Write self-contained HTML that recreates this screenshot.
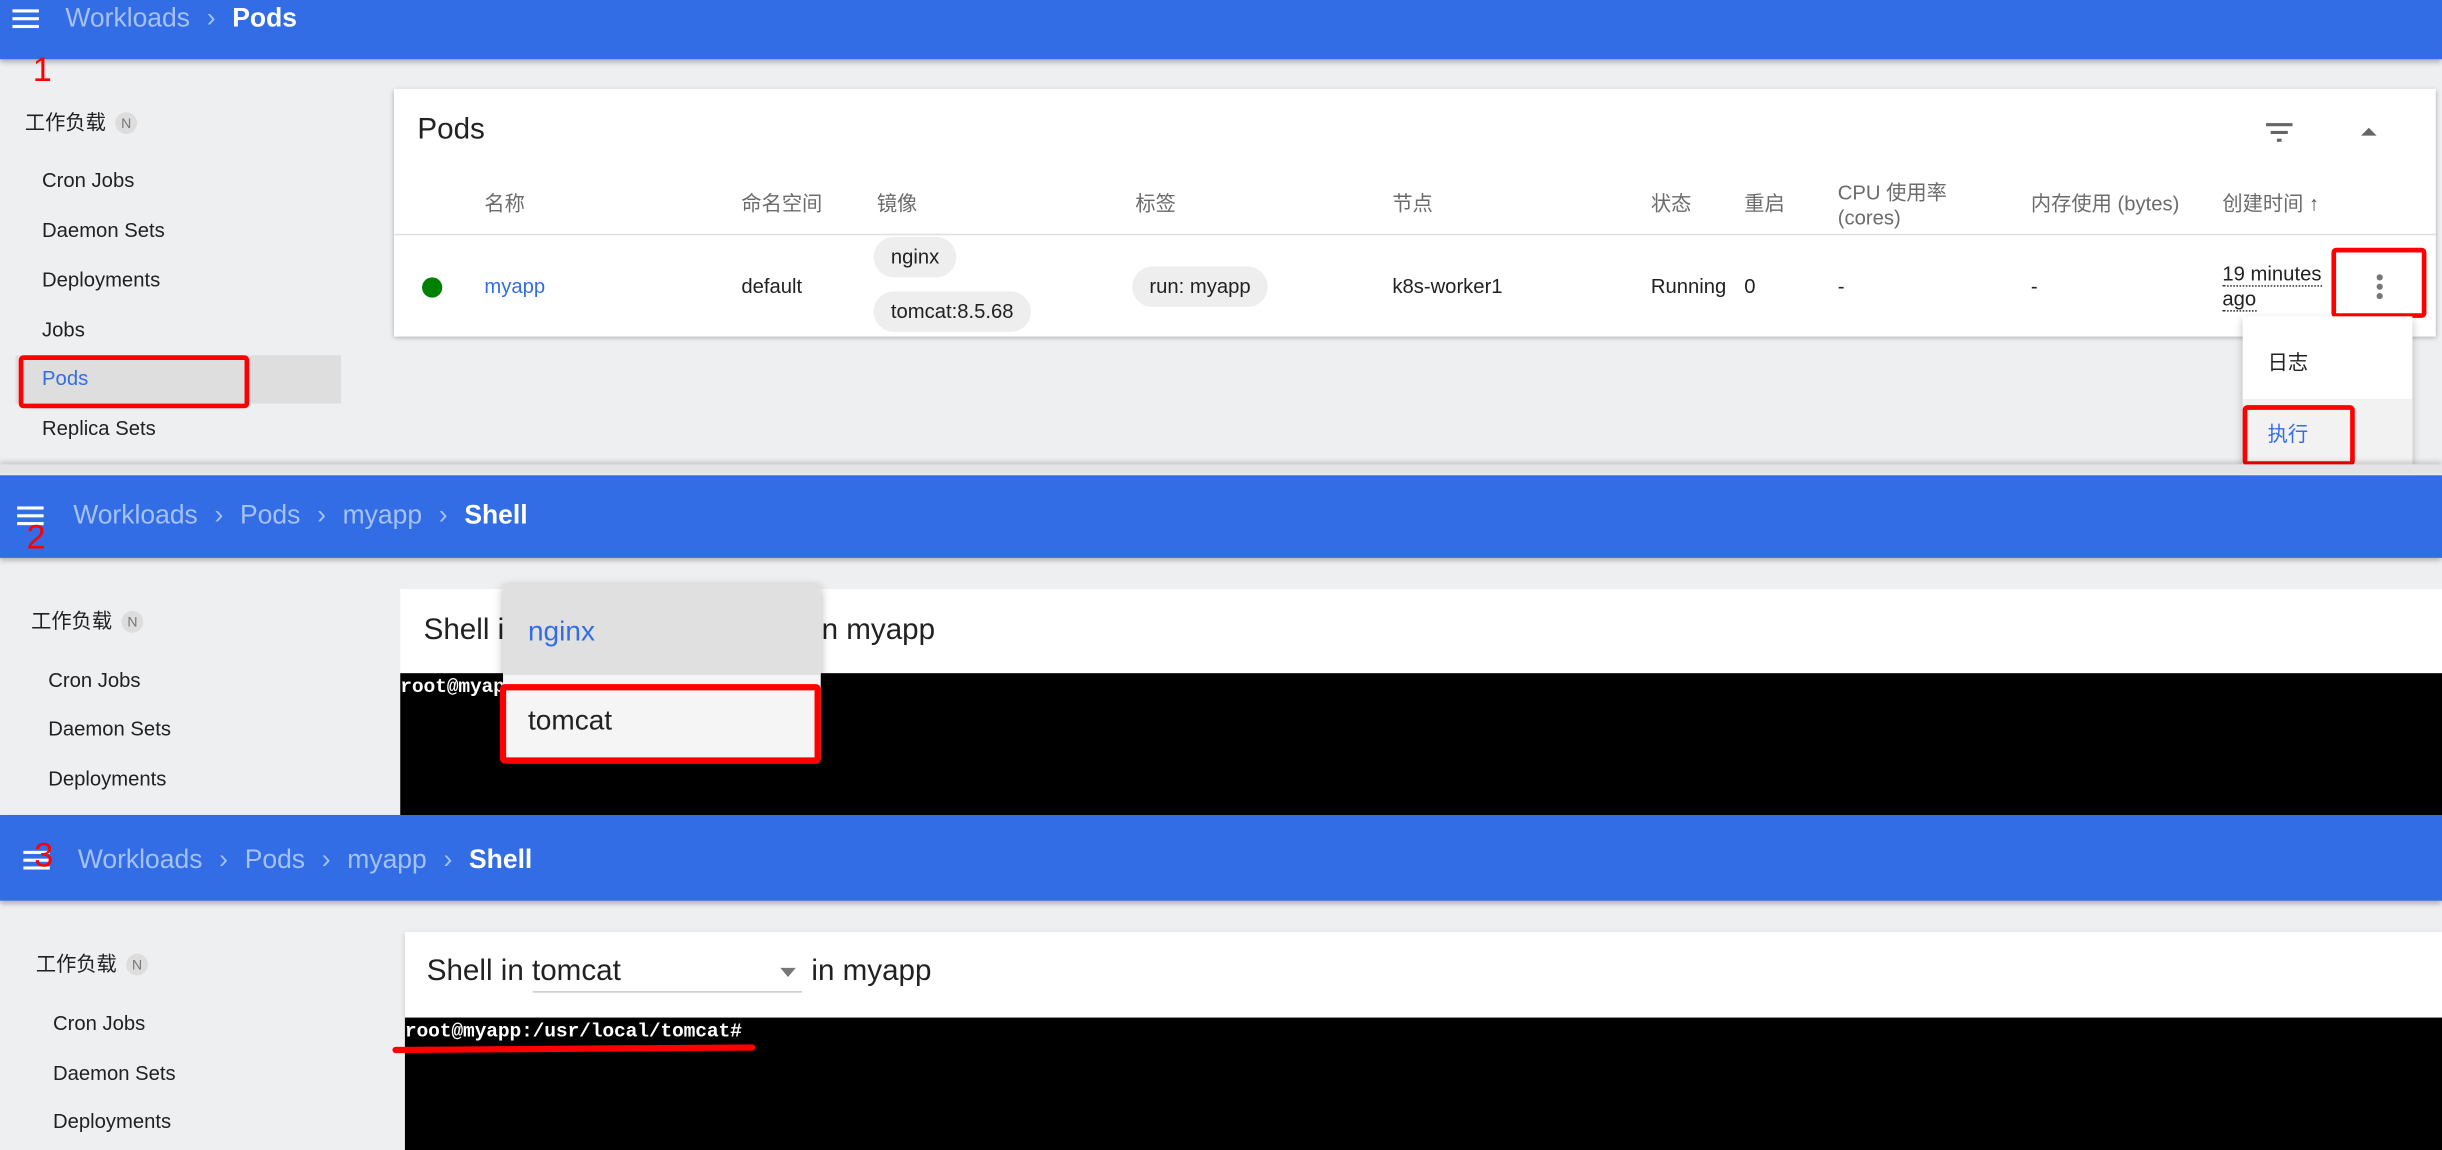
<!DOCTYPE html>
<html><head><meta charset="utf-8"><style>
*{margin:0;padding:0;box-sizing:border-box}
html,body{width:2442px;height:1150px;overflow:hidden;background:#eeeff1}
#w{position:absolute;left:0;top:0;width:1568px;height:738px;transform-origin:0 0;transform:scale(1.55740,1.5583);font-family:"Liberation Sans","Noto Sans CJK SC",sans-serif;color:#212121}
.a{position:absolute;white-space:nowrap}
.hdr{position:absolute;left:0;width:1568px;background:#326de6;box-shadow:0 2px 3px rgba(0,0,0,.25)}
.bc{position:absolute;font-size:17px;line-height:20px;color:#a6c1f4}
.bc b{color:#fff}
.ham{position:absolute;width:17px;height:12px;border-top:2px solid #fff;border-bottom:2px solid #fff}
.ham:after{content:"";position:absolute;left:0;right:0;top:3px;border-top:2px solid #fff}
.red{position:absolute;border:3px solid #f00;border-radius:3px}
.rn{position:absolute;color:#f00;font-size:22px;line-height:22px}
.sb{position:absolute;font-size:13px;line-height:16px;color:#212121}
.badge{display:inline-block;width:14px;height:14px;border-radius:7px;background:#ddd;color:#777;font-size:9px;line-height:14px;text-align:center;vertical-align:1px;margin-left:6px}
.card{position:absolute;background:#fff;box-shadow:0 1px 3px rgba(0,0,0,.3)}
.th{position:absolute;font-size:13px;line-height:16px;color:#6b6b6b}
.td{position:absolute;font-size:13px;line-height:16px;color:#212121}
.chip{position:absolute;background:#eeeeee;border-radius:13px;font-size:13px;line-height:26px;padding:0 11px;color:#212121}
.term{position:absolute;background:#000;color:#fff;font-family:"Liberation Mono","DejaVu Sans Mono",monospace;font-size:12.6px;line-height:15px;font-weight:bold;letter-spacing:-0.1px}
</style></head><body><div id="w">

<!-- PANEL 1 -->
<div class="hdr" style="top:0;height:38px"></div>
<div class="ham" style="left:8px;top:6px"></div>
<div class="bc" style="left:42px;top:2px">Workloads <span style="margin:0 6px">&#8250;</span> <b>Pods</b></div>
<div class="rn" style="left:21px;top:34px">1</div>

<div class="sb" style="left:16px;top:71px">工作负载<span class="badge">N</span></div>
<div class="sb" style="left:27px;top:108px">Cron Jobs</div>
<div class="sb" style="left:27px;top:140px">Daemon Sets</div>
<div class="sb" style="left:27px;top:172px">Deployments</div>
<div class="sb" style="left:27px;top:204px">Jobs</div>
<div class="a" style="left:10px;top:228px;width:209px;height:31px;background:#dedede"></div>
<div class="sb" style="left:27px;top:235px;color:#326de6">Pods</div>
<div class="red" style="left:12px;top:228px;width:148px;height:34px"></div>
<div class="sb" style="left:27px;top:267px">Replica Sets</div>

<div class="card" style="left:253px;top:57px;width:1311px;height:159px"></div>
<div class="a" style="left:268px;top:73px;font-size:19px;line-height:22px">Pods</div>
<svg class="a" style="left:1454px;top:77px" width="19" height="16" viewBox="0 0 19 16"><rect x="1" y="2" width="17" height="2" fill="#666"/><rect x="4" y="7" width="11" height="2" fill="#666"/><rect x="8" y="12" width="3" height="2" fill="#666"/></svg>
<svg class="a" style="left:1516px;top:81px" width="10" height="7"><path d="M0 6 L5 1 L10 6Z" fill="#666"/></svg>

<div class="th" style="left:311px;top:123px">名称</div>
<div class="th" style="left:476px;top:123px">命名空间</div>
<div class="th" style="left:563px;top:123px">镜像</div>
<div class="th" style="left:729px;top:123px">标签</div>
<div class="th" style="left:894px;top:123px">节点</div>
<div class="th" style="left:1060px;top:123px">状态</div>
<div class="th" style="left:1120px;top:123px">重启</div>
<div class="th" style="left:1180px;top:116px">CPU 使用率<br>(cores)</div>
<div class="th" style="left:1304px;top:123px">内存使用 (bytes)</div>
<div class="th" style="left:1427px;top:123px">创建时间 <b style="color:#555">&#8593;</b></div>
<div class="a" style="left:253px;top:150px;width:1311px;height:1px;background:#e0e0e0"></div>

<div class="a" style="left:271px;top:178px;width:13px;height:13px;border-radius:7px;background:#008000"></div>
<div class="td" style="left:311px;top:176px;color:#326de6">myapp</div>
<div class="td" style="left:476px;top:176px">default</div>
<div class="chip" style="left:561px;top:152px">nginx</div>
<div class="chip" style="left:561px;top:187px">tomcat:8.5.68</div>
<div class="chip" style="left:727px;top:171px">run: myapp</div>
<div class="td" style="left:894px;top:176px">k8s-worker1</div>
<div class="td" style="left:1060px;top:176px">Running</div>
<div class="td" style="left:1120px;top:176px">0</div>
<div class="td" style="left:1180px;top:176px">-</div>
<div class="td" style="left:1304px;top:176px">-</div>
<div class="td" style="left:1427px;top:168px;line-height:16px"><span style="border-bottom:1px dotted #333">19 minutes</span><br><span style="border-bottom:1px dotted #333">ago</span></div>
<svg class="a" style="left:1525px;top:175px" width="6" height="18"><circle cx="3" cy="3" r="2" fill="#777"/><circle cx="3" cy="9" r="2" fill="#777"/><circle cx="3" cy="15" r="2" fill="#777"/></svg>
<div class="red" style="left:1497px;top:159px;width:61px;height:45px"></div>

<div class="a" style="left:1440px;top:203px;width:109px;height:97px;background:#fff;box-shadow:0 2px 5px rgba(0,0,0,.25)"></div>
<div class="td" style="left:1456px;top:225px">日志</div>
<div class="a" style="left:1440px;top:256px;width:109px;height:44px;background:#f2f2f2"></div>
<div class="td" style="left:1456px;top:271px;color:#326de6">执行</div>
<div class="red" style="left:1440px;top:260px;width:72px;height:39px"></div>

<!-- separator -->
<div class="a" style="left:0;top:298px;width:1568px;height:6px;background:#e4e4e6;box-shadow:0 -2px 3px rgba(0,0,0,.15)"></div>

<!-- PANEL 2 -->
<div class="a" style="left:0;top:304px;width:1568px;height:219px;background:#eeeff1;overflow:hidden"></div>
<div class="hdr" style="top:305px;height:53px"></div>
<div class="ham" style="left:11px;top:325px"></div>
<div class="bc" style="left:47px;top:321px">Workloads <span style="margin:0 6px">&#8250;</span> Pods <span style="margin:0 6px">&#8250;</span> myapp <span style="margin:0 6px">&#8250;</span> <b>Shell</b></div>
<div class="rn" style="left:17px;top:334px">2</div>

<div class="sb" style="left:20px;top:391px">工作负载<span class="badge">N</span></div>
<div class="sb" style="left:31px;top:429px">Cron Jobs</div>
<div class="sb" style="left:31px;top:460px">Daemon Sets</div>
<div class="sb" style="left:31px;top:492px">Deployments</div>

<div class="a" style="left:257px;top:378px;width:1311px;height:54px;background:#fff"></div>
<div class="a" style="left:272px;top:394px;font-size:19px;line-height:22px">Shell in tomcat&nbsp;&nbsp;&nbsp;&nbsp;&nbsp;&nbsp;&nbsp;&nbsp;&nbsp;&nbsp;&nbsp;&nbsp;&nbsp;&nbsp;&nbsp;&nbsp;&nbsp;&nbsp;&nbsp;&nbsp;&nbsp;&nbsp;&nbsp;&nbsp;in myapp</div>
<div class="term" style="left:257px;top:432px;width:1311px;height:91px;padding:2px 0 0 0">root@myapp:/usr/local/tomcat#</div>

<div class="a" style="left:323px;top:375px;width:204px;height:115px;background:#f5f5f5;border-radius:3px;box-shadow:0 2px 6px rgba(0,0,0,.3)"></div>
<div class="a" style="left:323px;top:375px;width:204px;height:58px;background:#e0e0e0;border-radius:3px 3px 0 0"></div>
<div class="a" style="left:339px;top:394px;font-size:18px;line-height:22px;color:#326de6">nginx</div>
<div class="a" style="left:339px;top:451px;font-size:18px;line-height:22px;color:#212121">tomcat</div>
<div class="red" style="left:321px;top:439px;width:206px;height:51px;border-width:4px"></div>

<!-- PANEL 3 -->
<div class="hdr" style="top:523px;height:55px"></div>
<div class="ham" style="left:15px;top:546px"></div>
<div class="bc" style="left:50px;top:542px">Workloads <span style="margin:0 6px">&#8250;</span> Pods <span style="margin:0 6px">&#8250;</span> myapp <span style="margin:0 6px">&#8250;</span> <b>Shell</b></div>
<div class="rn" style="left:22px;top:538px">3</div>

<div class="sb" style="left:23px;top:611px">工作负载<span class="badge">N</span></div>
<div class="sb" style="left:34px;top:649px">Cron Jobs</div>
<div class="sb" style="left:34px;top:681px">Daemon Sets</div>
<div class="sb" style="left:34px;top:712px">Deployments</div>

<div class="a" style="left:260px;top:598px;width:1308px;height:55px;background:#fff;box-shadow:0 1px 3px rgba(0,0,0,.2)"></div>
<div class="a" style="left:274px;top:613px;font-size:19px;line-height:22px">Shell in tomcat</div>
<div class="a" style="left:342px;top:636px;width:173px;height:1px;background:#ccc"></div>
<svg class="a" style="left:501px;top:621px" width="10" height="6"><path d="M0 0 L10 0 L5 6Z" fill="#777"/></svg>
<div class="a" style="left:521px;top:613px;font-size:19px;line-height:22px">in myapp</div>
<div class="term" style="left:260px;top:653px;width:1308px;height:85px;padding-top:2px">root@myapp:/usr/local/tomcat#</div>
<div class="a" style="left:252px;top:671px;width:233px;height:4px;background:#f00;border-radius:2px;transform:rotate(-0.4deg)"></div>

</div></body></html>
